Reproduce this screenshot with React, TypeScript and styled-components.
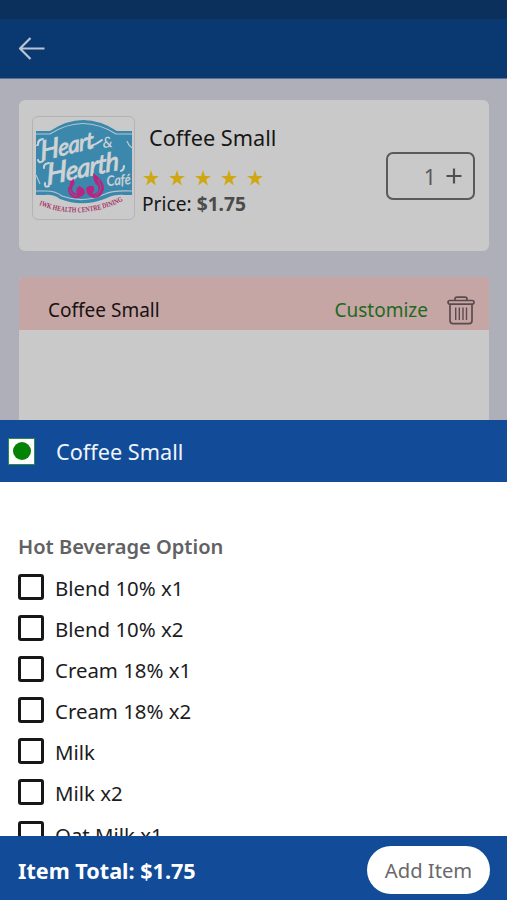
import React from "react";
import styled, { createGlobalStyle } from "styled-components";

const GlobalStyle = createGlobalStyle`
  * { box-sizing: border-box; }
  body { margin: 0; background: #fff; font-family: "Noto Sans", sans-serif; }
  button { font: inherit; border: 0; background: none; padding: 0; margin: 0; }
`;

const Screen = styled.div`
  width: 507px;
  height: 900px;
  display: flex;
  flex-direction: column;
  overflow: hidden;
`;

const StatusBar = styled.div`
  height: 19px;
  flex: none;
  background: #0a305b;
`;

const NavBar = styled.header`
  height: 60px;
  flex: none;
  display: flex;
  align-items: center;
  padding-left: 18px;
  background: #0a3972;
  border-bottom: 1px solid #5c719a;
`;

const IconButton = styled.button`
  display: block;
  line-height: 0;
`;

const OrderPage = styled.main`
  flex: 1;
  min-height: 0;
  overflow: hidden;
  padding: 21px 18px 0 19px;
  background: #afafba;
`;

const ItemCard = styled.section`
  height: 151px;
  display: flex;
  align-items: flex-start;
  padding: 16px 14px 0 13px;
  border-radius: 6px;
  background: #c9c9c9;
`;

const LogoFrame = styled.div`
  width: 103px;
  height: 104px;
  border: 1px solid #b3b3b5;
  border-radius: 6px;
  overflow: hidden;
  background: #cacaca;
`;

const ItemInfo = styled.div`
  flex: 1;
  padding: 7px 0 0 7px;
`;

const ItemName = styled.h1`
  margin: 0 0 0 7px;
  font-size: 21.7px;
  line-height: 30px;
  font-weight: 400;
  color: #171717;
`;

const Stars = styled.div`
  display: flex;
  gap: 10px;
  margin: 17px 0 0 1px;
  height: 17px;
`;

const Price = styled.div`
  margin-top: 4px;
  font-size: 19.2px;
  line-height: 26px;
  color: #171717;
  strong { font-weight: 700; color: #4b4b4b; }
`;

const Quantity = styled.div`
  width: 89px;
  height: 48px;
  margin-top: 36px;
  display: flex;
  align-items: center;
  justify-content: flex-end;
  gap: 10px;
  padding-right: 11px;
  border: 2px solid #5a5a5a;
  border-radius: 7px;
  color: #5a5a5a;
  font-size: 21.5px;
`;

const OrderLines = styled.section`
  margin-top: 26px;
  height: 220px;
  border-radius: 4px;
  overflow: hidden;
  background: #c9c9c9;
`;

const OrderLine = styled.div`
  height: 53px;
  display: flex;
  align-items: center;
  padding: 13px 14px 0 29px;
  background: #c6a5a5;
  font-size: 19px;
  line-height: 26px;
  color: #171212;
`;

const Customize = styled.button`
  margin-left: auto;
  margin-right: 19px;
  color: #1e6a1b;
`;

const SheetHeader = styled.header`
  height: 62px;
  flex: none;
  display: flex;
  align-items: center;
  gap: 21px;
  padding-left: 8px;
  background: #124b97;
  color: #eef4fc;
  font-size: 21.7px;
`;

const VegMark = styled.span`
  width: 27px;
  height: 27px;
  display: grid;
  place-items: center;
  border: 1px solid #2b8b48;
  background: #fff;
  &::after {
    content: "";
    width: 18px;
    height: 18px;
    border-radius: 50%;
    background: #048204;
  }
`;

const Options = styled.section`
  height: 354px;
  flex: none;
  overflow: hidden;
  padding: 51px 18px 0;
  background: #fff;
`;

const GroupTitle = styled.h2`
  margin: 0 0 13px;
  font-size: 20.1px;
  line-height: 28px;
  font-weight: 600;
  color: #626265;
`;

const Option = styled.label`
  height: 41.1px;
  display: flex;
  align-items: flex-start;
  gap: 11px;
  font-size: 20.4px;
  line-height: 28px;
  color: #1c1c1e;
`;

const Checkbox = styled.input`
  appearance: none;
  width: 26px;
  height: 26px;
  margin: 0;
  border: 3px solid #171719;
  border-radius: 3px;
  background: #fff;
`;

const Footer = styled.footer`
  height: 64px;
  flex: none;
  display: flex;
  align-items: center;
  justify-content: space-between;
  padding: 4px 17px 0 18px;
  background: #124b97;
  color: #fff;
  font-size: 21.6px;
  font-weight: 700;
`;

const AddButton = styled.button`
  width: 123px;
  height: 48px;
  border-radius: 24px;
  background: #fff;
  color: #69696c;
  font-size: 20.2px;
  font-weight: 400;
`;

const BackIcon = () => (
  <svg width="28" height="26" viewBox="0 0 28 26" fill="none" stroke="#b9c5d0" strokeWidth="2.2">
    <path d="M26.500 12.500H2M12.500 2L2 12.500l10.500 10.500" strokeLinejoin="round" />
  </svg>
);

const Star = () => (
  <svg width="16" height="16" viewBox="0 0 16 16">
    <path fill="#cfa713" d="M8 0l1.900 5.900H16l-4.900 3.600 1.800 5.900L8 11.800l-4.900 3.600 1.800-5.900L0 5.900h6.100z" />
  </svg>
);

const PlusIcon = () => (
  <svg width="16" height="16" viewBox="0 0 16 16" stroke="#505050" strokeWidth="2.200">
    <path d="M8 .5v15M.5 8h15" />
  </svg>
);

const TrashIcon = () => (
  <svg width="28" height="29" viewBox="0 0 28 29" fill="none" stroke="#5a4c4c" strokeWidth="1.700">
    <rect x="1" y="4.500" width="26" height="3.600" rx="1.800" />
    <path d="M8 4.500V3.200Q8 1.200 10 1.200h8q2 0 2 2v1.300M3 8.200V24.500Q3 27.700 6 27.700H22Q25 27.700 25 24.500V8.200" />
    <path d="M8.700 11.500v12.500M12.300 11.500v12.500M16 11.500v12.500M19.500 11.500v12.500" strokeWidth="1.400" />
  </svg>
);

const CafeLogo = () => (
  <svg width="101" height="102" viewBox="0 0 101 102">
    <defs>
      <path id="tagline" d="M6 88Q48 105 92 83" />
    </defs>
    <path fill="#3c88ad" d="M3 14H17Q50-8 84 14H99V78H92Q82 77 74 81Q50 91 27 82Q20 77 12 78H3z" />
    <path
      fill="none"
      stroke="#b4c7ce"
      strokeWidth="1.200"
      d="M3 17H17Q50-4 83 17H99M3 74H13Q23 74 29 79Q50 87 72 77Q80 73 99 74M3 29Q6 27 7 23M94 24Q95 28 99 31M3 58L7 67"
    />
    <g fill="#d0d3d4" fontFamily="Lato, sans-serif" fontStyle="italic" fontWeight="500">
      <g stroke="#d0d3d4" strokeWidth=".7">
        <text transform="translate(8 44) rotate(-14) skewX(-10)" fontSize="23" textLength="55">
          <tspan fontSize="27">H</tspan>eart
        </text>
        <text transform="translate(14 68) rotate(-12) skewX(-10)" fontSize="26" textLength="74">
          <tspan fontSize="29">H</tspan>earth
        </text>
      </g>
      <path
        d="M5 28Q4 23 10 22M10 44Q6 47 5 43M11 51Q10 47 16 46M16 69Q11 71 12 66M58 29Q64 27 69 23M88 54Q91 53 91 49"
        fill="none"
        stroke="#d0d3d4"
        strokeWidth="2"
        strokeLinecap="round"
      />
      <text transform="translate(70 31) rotate(-5)" fontSize="15">&amp;</text>
      <text transform="translate(74 69) rotate(-5)" fontSize="14" textLength="24" lengthAdjust="spacingAndGlyphs" stroke="#d0d3d4" strokeWidth=".3">Café</text>
    </g>
    <g fill="#b8247f">
      <path d="M40 61Q43 66 40 69Q37 74 44 77Q42 72 46 69Q52 71 52 76Q48 82 41 81Q34 78 35 71Q38 68 37 64Q40 64 40 61z" />
      <path d="M60 56Q71 63 71 72Q69 81 61 81Q53 79 53 71Q56 68 60 69Q63 72 59 77Q67 76 65 69Q60 66 60 56z" />
      <path d="M65 62Q67 67 68 70Q67 76 62 79M37 72Q36 77 44 79" fill="none" stroke="#3c88ad" strokeWidth=".8" />
    </g>
    <text fill="#a53367" fontFamily="Liberation Serif, serif" fontWeight="700" fontSize="7.500">
      <textPath href="#tagline" textLength="87" lengthAdjust="spacingAndGlyphs">IWK HEALTH CENTRE DINING</textPath>
    </text>
  </svg>
);

const OPTIONS = [
  "Blend 10% x1",
  "Blend 10% x2",
  "Cream 18% x1",
  "Cream 18% x2",
  "Milk",
  "Milk x2",
  "Oat Milk x1",
];

export default function App() {
  return (
    <>
      <GlobalStyle />
      <Screen>
        <StatusBar />
        <NavBar>
          <IconButton aria-label="Back"><BackIcon /></IconButton>
        </NavBar>
        <OrderPage>
          <ItemCard>
            <LogoFrame><CafeLogo /></LogoFrame>
            <ItemInfo>
              <ItemName>Coffee Small</ItemName>
              <Stars>{[1, 2, 3, 4, 5].map((n) => <Star key={n} />)}</Stars>
              <Price>Price: <strong>$1.75</strong></Price>
            </ItemInfo>
            <Quantity>
              <span>1</span>
              <IconButton aria-label="Increase"><PlusIcon /></IconButton>
            </Quantity>
          </ItemCard>
          <OrderLines>
            <OrderLine>
              <span>Coffee Small</span>
              <Customize>Customize</Customize>
              <IconButton aria-label="Remove"><TrashIcon /></IconButton>
            </OrderLine>
          </OrderLines>
        </OrderPage>
        <SheetHeader>
          <VegMark />
          <span>Coffee Small</span>
        </SheetHeader>
        <Options>
          <GroupTitle>Hot Beverage Option</GroupTitle>
          {OPTIONS.map((name) => (
            <Option key={name}>
              <Checkbox type="checkbox" />
              <span>{name}</span>
            </Option>
          ))}
        </Options>
        <Footer>
          <span>Item Total: $1.75</span>
          <AddButton>Add Item</AddButton>
        </Footer>
      </Screen>
    </>
  );
}
